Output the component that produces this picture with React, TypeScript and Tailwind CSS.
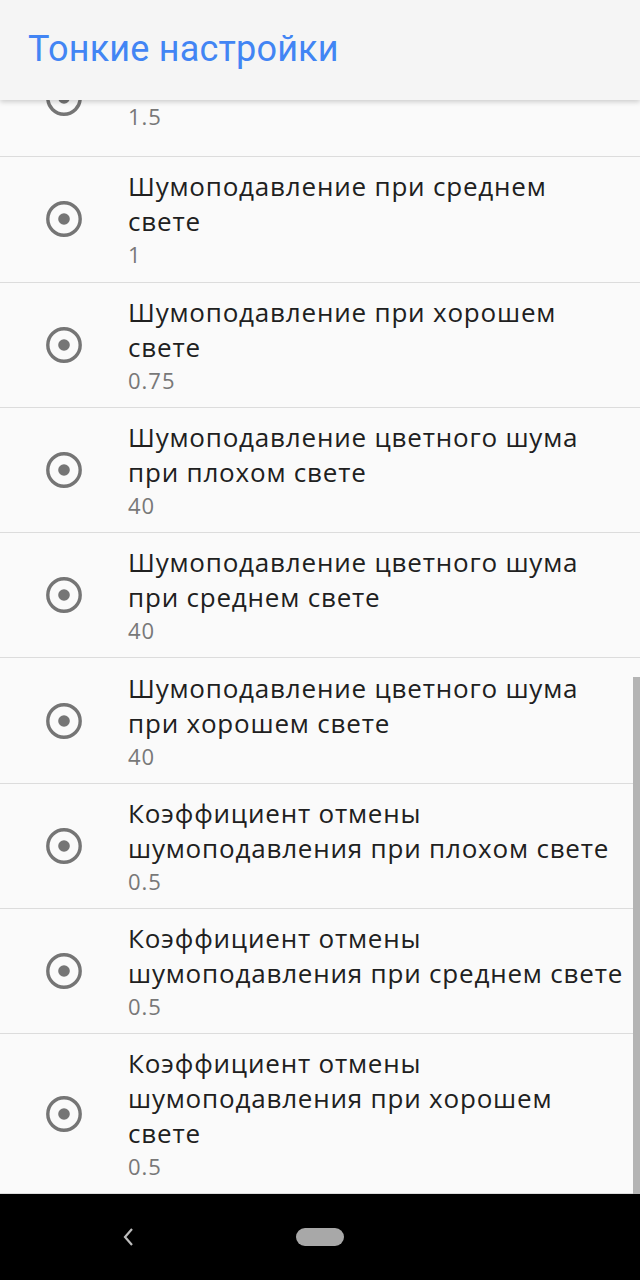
const items = [
  { title: "Шумоподавление при плохом свете", value: "1.5" },
  { title: "Шумоподавление при среднем свете", value: "1" },
  { title: "Шумоподавление при хорошем свете", value: "0.75" },
  { title: "Шумоподавление цветного шума при плохом свете", value: "40" },
  { title: "Шумоподавление цветного шума при среднем свете", value: "40" },
  { title: "Шумоподавление цветного шума при хорошем свете", value: "40" },
  { title: "Коэффициент отмены шумоподавления при плохом свете", value: "0.5" },
  { title: "Коэффициент отмены шумоподавления при среднем свете", value: "0.5" },
  { title: "Коэффициент отмены шумоподавления при хорошем свете", value: "0.5" },
];

const RadioIcon = () => (
  <svg width="36" height="36" viewBox="0 0 36 36">
    <circle cx="18" cy="18" r="16.2" fill="none" stroke="#757575" strokeWidth="3.4" />
    <circle cx="18" cy="18" r="5.8" fill="#757575" />
  </svg>
);

export default function App() {
  return (
    <div className="h-[1280px] w-[640px] flex flex-col bg-[#fafafa] overflow-hidden">
      <header className="relative z-10 h-[100px] shrink-0 bg-[#f5f5f5] shadow-[0_2px_5px_rgba(0,0,0,0.18)] flex items-center pl-[28px]">
        <h1 className="text-[36px] leading-none tracking-[0.2px] text-[#4285f4] pb-[2px] font-['Roboto',sans-serif]">
          Тонкие настройки
        </h1>
      </header>

      <div className="relative flex-1 overflow-hidden font-['Open_Sans',sans-serif]">
        <div className="mt-[-68px]">
          {items.map((it, i) => (
            <div
              key={it.title}
              className={`flex items-center min-h-[125.3px] border-b border-[#dcdcdc] ${i === 0 ? "pt-[8px]" : ""}`}
            >
              <div className="w-[128px] shrink-0 flex justify-center">
                <RadioIcon />
              </div>
              <div className="flex-1 pr-[15px] py-3">
                <div className="text-[26px] leading-[35px] tracking-[0.8px] text-[#202020]">{it.title}</div>
                <div className="text-[22px] leading-[30px] tracking-[1px] text-[#787878]">{it.value}</div>
              </div>
            </div>
          ))}
        </div>
        <div className="absolute right-0 top-[577px] bottom-0 w-[7px] bg-[#b4b4b4]" />
      </div>

      <nav className="h-[86px] shrink-0 bg-black flex items-center justify-center relative">
        <svg className="absolute left-[121px] top-[33px]" width="16" height="20" viewBox="0 0 16 20">
          <path d="M11 2 L4 10 L11 18" fill="none" stroke="#bdbdbd" strokeWidth="2.2" />
        </svg>
        <div className="w-[48px] h-[18px] rounded-full bg-[#a8a8a8]" />
      </nav>
    </div>
  );
}
